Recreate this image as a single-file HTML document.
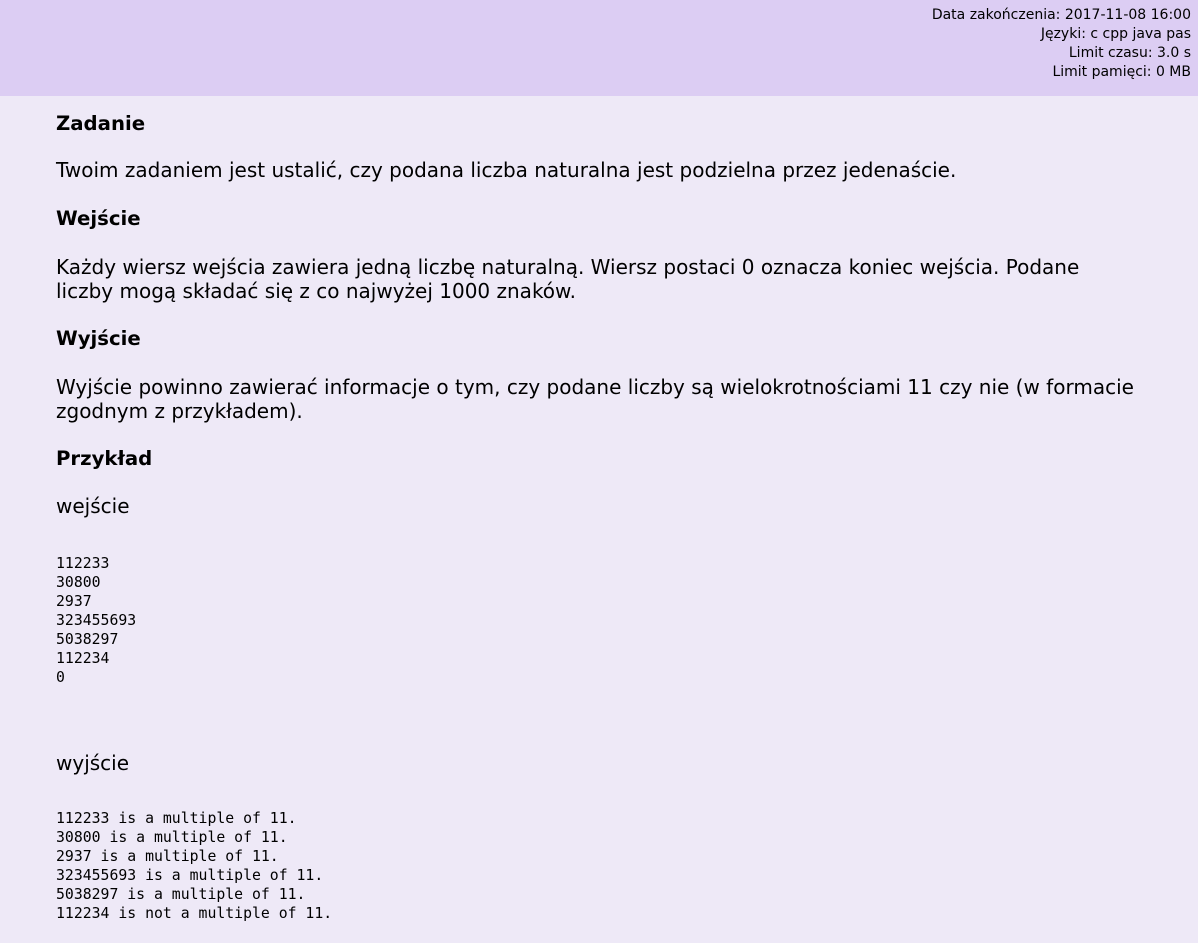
<!DOCTYPE html>
<html><head><meta charset="utf-8"><style>
body{margin:0;background:#eee9f7;width:1198px;height:943px;overflow:hidden;font-family:"DejaVu Sans","Liberation Sans",sans-serif;color:#000;position:relative}
.hdr{position:absolute;left:0;top:0;width:1198px;height:96px;background:#dccdf3}
.hdr div{position:absolute;right:7px;font-size:14px;line-height:19px;white-space:nowrap}
.a{position:absolute;left:56px;white-space:nowrap}
.h{font-weight:bold;font-size:19.7px;line-height:24px}
.p{font-size:20px;line-height:24px}
pre.a{margin:0;white-space:pre;font-family:"DejaVu Sans Mono","Liberation Mono",monospace;font-size:14.8px;line-height:19px}
</style></head><body>
<div class="hdr">
<div style="top:6px">Data zakończenia: 2017-11-08 16:00</div>
<div style="top:25px">Języki: c cpp java pas</div>
<div style="top:44px">Limit czasu: 3.0 s</div>
<div style="top:63px">Limit pamięci: 0 MB</div>
</div>
<div class="a h" style="top:112px">Zadanie</div>
<div class="a p" style="top:158px">Twoim zadaniem jest ustalić, czy podana liczba naturalna jest podzielna przez jedenaście.</div>
<div class="a h" style="top:207px">Wejście</div>
<div class="a p" style="top:255px">Każdy wiersz wejścia zawiera jedną liczbę naturalną. Wiersz postaci 0 oznacza koniec wejścia. Podane<br>liczby mogą składać się z co najwyżej 1000 znaków.</div>
<div class="a h" style="top:327px">Wyjście</div>
<div class="a p" style="top:375px">Wyjście powinno zawierać informacje o tym, czy podane liczby są wielokrotnościami 11 czy nie (w formacie<br>zgodnym z przykładem).</div>
<div class="a h" style="top:447px">Przykład</div>
<div class="a p" style="top:494px">wejście</div>
<pre class="a" style="top:554px">112233
30800
2937
323455693
5038297
112234
0</pre>
<div class="a p" style="top:751px">wyjście</div>
<pre class="a" style="top:809px">112233 is a multiple of 11.
30800 is a multiple of 11.
2937 is a multiple of 11.
323455693 is a multiple of 11.
5038297 is a multiple of 11.
112234 is not a multiple of 11.</pre>
</body></html>
